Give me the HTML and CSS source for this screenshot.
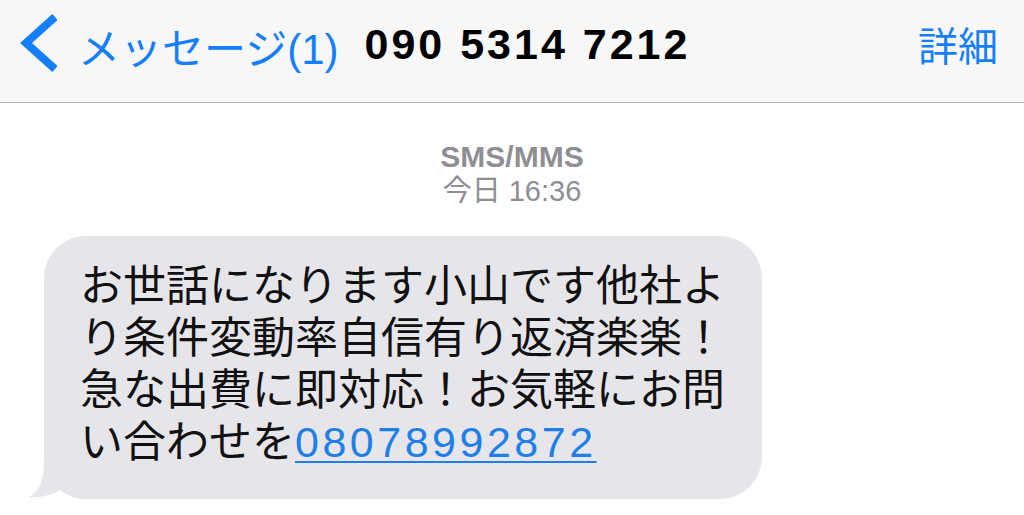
FILE: index.html
```html
<!DOCTYPE html>
<html lang="ja">

<head>
    <meta charset="utf-8">
    <meta name="viewport" content="width=device-width, initial-scale=1">
    <title>090 5314 7212</title>
    <link rel="stylesheet" href="styles.css">
</head>

<body>

    <div class="navbar">
        <a class="back" href="#">
            <svg class="chevron" width="40" height="60" viewBox="0 0 40 60">
                <path d="M38 3 L9 29 L38 55" fill="none" stroke="#157efb" stroke-width="8" />
            </svg>
            <span class="back-label">メッセージ(1)</span>
        </a>
        <span class="title">090 5314 7212</span>
        <a class="details" href="#">詳細</a>
    </div>

    <div class="stamp">
        <div class="service">SMS/MMS</div>
        <div class="time">今日 16:36</div>
    </div>

    <div class="thread">
        <div class="bubble">
            お世話になります小山です他社より条件変動率自信有り返済楽楽！急な出費に即対応！お気軽にお問い合わせを<a class="phone" href="#">08078992872</a>
            <svg class="tail" width="60" height="40" viewBox="0 0 60 40">
                <path d="M16 0 C16 22 11 33 1 38 C12 39 24 36 32 31 C38 35 46 40 56 40 L56 0 Z" fill="#e5e5ea" />
            </svg>
        </div>
    </div>

</body>

</html>
```

FILE: styles.css
```css
body {
    margin: 0;
    background: #ffffff;
    font-family: "Liberation Sans", "Noto Sans CJK JP", sans-serif;
}

a {
    text-decoration: none;
}

.navbar {
    display: flex;
    align-items: center;
    height: 88px;
    padding-bottom: 14px;
    background: #f7f7f7;
    border-bottom: 1px solid #b8b8b8;
}

.back {
    display: flex;
    align-items: center;
    margin-left: 17px;
    color: #157efb;
}

.chevron {
    display: block;
}

.back-label {
    margin-left: 21px;
    margin-top: 2px;
    font-size: 42px;
}

.title {
    margin-left: 26px;
    font-size: 43px;
    font-weight: bold;
    letter-spacing: 3px;
    color: #000000;
}

.details {
    margin-left: auto;
    margin-right: 26px;
    font-family: "Noto Sans CJK JP", sans-serif;
    font-size: 40px;
    color: #157efb;
}

.stamp {
    margin-top: 36px;
    text-align: center;
    color: #8e8e93;
    line-height: 35px;
}

.service {
    font-size: 30px;
    font-weight: bold;
}

.time {
    font-size: 29px;
}

.thread {
    padding: 27px 0 0 44px;
}

.bubble {
    position: relative;
    width: 660px;
    padding: 20px 22px 31px 36px;
    background: #e5e5ea;
    border-radius: 42px;
    font-family: "Noto Sans CJK JP", sans-serif;
    font-size: 43px;
    line-height: 52px;
    color: #111111;
}

.phone {
    font-family: "Liberation Sans", sans-serif;
    letter-spacing: 3.5px;
    color: #1f7fe8;
    text-decoration: underline;
    text-decoration-thickness: 2px;
    text-underline-offset: 4px;
}

.tail {
    position: absolute;
    left: -16px;
    bottom: 0;
}
```
